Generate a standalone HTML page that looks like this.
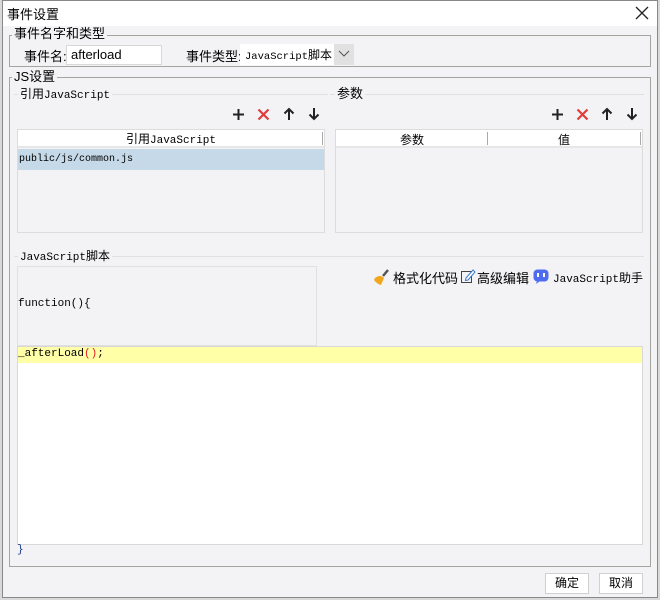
<!DOCTYPE html>
<html><head><meta charset="utf-8"><style>
*{box-sizing:border-box;margin:0;padding:0}
body{width:660px;height:600px;overflow:hidden;background:#d9d9d9;position:relative;font-family:"Liberation Sans","Noto Sans CJK SC",sans-serif;font-size:13px;color:#000}
.a{position:absolute;white-space:nowrap}
.mono{font-family:"Liberation Mono","Noto Sans CJK SC",monospace;font-size:10px}
.mono b{font-weight:normal;font-size:12px;font-family:"Noto Sans CJK SC",sans-serif}
.dlg{left:2px;top:0;width:656px;height:598px;background:#f3f3f5;border:1px solid #888}
.grp{border:1px solid #a5a5a0}
.lbl{background:#f3f3f5;padding:0 2px;line-height:14px}
.line{height:1px;background:#e0e0e0}
.tbl{background:#f3f3f5;border:1px solid #dcdcdc}
.btn{background:#fff;border:1px solid #d0d0d0;text-align:center;line-height:19px;font-size:12px}
</style></head><body>
<div class="a dlg"></div>
<div class="a" style="left:3px;top:1px;width:654px;height:25px;background:#fff"></div>
<div class="a" style="left:7px;top:4px;font-size:13px">事件设置</div>
<svg class="a" style="left:635px;top:6px" width="14" height="14"><path d="M1 1L13 13M13 1L1 13" stroke="#222" stroke-width="1.3"/></svg>

<div class="a grp" style="left:9px;top:35px;width:642px;height:32px"></div>
<div class="a lbl" style="left:12px;top:27px">事件名字和类型</div>
<div class="a" style="left:24px;top:46px">事件名:</div>
<div class="a" style="left:66px;top:45px;width:96px;height:20px;background:#fff;border:1px solid #d8d8d8;padding-left:4px;line-height:18px">afterload</div>
<div class="a" style="left:186px;top:46px">事件类型:</div>
<div class="a mono" style="left:240px;top:44px;width:94px;height:21px;background:#fff;padding-left:5px;line-height:21px;font-size:10.5px;overflow:hidden">JavaScript<b>脚本</b></div>
<div class="a" style="left:334px;top:44px;width:20px;height:21px;background:#e1e1e1"></div>
<svg class="a" style="left:338px;top:50px" width="12" height="8"><path d="M1 1L6 6L11 1" stroke="#555" fill="none"/></svg>

<div class="a grp" style="left:9px;top:77px;width:642px;height:490px"></div>
<div class="a lbl" style="left:12px;top:70px">JS设置</div>
<div class="a line" style="left:14px;top:94px;width:314px"></div>
<div class="a lbl mono" style="left:18px;top:87px;font-size:11px"><b>引用</b>JavaScript</div>
<div class="a line" style="left:330px;top:94px;width:314px"></div>
<div class="a lbl" style="left:335px;top:87px">参数</div>

<svg class="a" style="left:232px;top:108px" width="13" height="13"><path d="M6.5 1V12M1 6.5H12" stroke="#222" stroke-width="2"/></svg>
<svg class="a" style="left:257px;top:108px" width="13" height="13"><path d="M1.5 1.5L11.5 11.5M11.5 1.5L1.5 11.5" stroke="#e03c3c" stroke-width="2.2"/></svg>
<svg class="a" style="left:283px;top:107px" width="12" height="14"><path d="M6 13V2M1.5 6.5L6 2L10.5 6.5" stroke="#222" stroke-width="2" fill="none"/></svg>
<svg class="a" style="left:308px;top:107px" width="12" height="14"><path d="M6 1V12M1.5 7.5L6 12L10.5 7.5" stroke="#222" stroke-width="2" fill="none"/></svg>
<svg class="a" style="left:551px;top:108px" width="13" height="13"><path d="M6.5 1V12M1 6.5H12" stroke="#222" stroke-width="2"/></svg>
<svg class="a" style="left:576px;top:108px" width="13" height="13"><path d="M1.5 1.5L11.5 11.5M11.5 1.5L1.5 11.5" stroke="#e03c3c" stroke-width="2.2"/></svg>
<svg class="a" style="left:601px;top:107px" width="12" height="14"><path d="M6 13V2M1.5 6.5L6 2L10.5 6.5" stroke="#222" stroke-width="2" fill="none"/></svg>
<svg class="a" style="left:626px;top:107px" width="12" height="14"><path d="M6 1V12M1.5 7.5L6 12L10.5 7.5" stroke="#222" stroke-width="2" fill="none"/></svg>

<div class="a tbl" style="left:17px;top:129px;width:308px;height:104px"></div>
<div class="a mono" style="left:18px;top:130px;width:306px;height:18px;background:#fff;text-align:center;line-height:18px;border-bottom:2px solid #e6e6e6;font-size:11px"><b>引用</b>JavaScript</div>
<div class="a" style="left:322px;top:132px;width:1px;height:13px;background:#aaa"></div>
<div class="a mono" style="left:18px;top:149px;width:306px;height:21px;background:#c5d9e8;line-height:21px;padding-left:1px">public/js/common.js</div>

<div class="a tbl" style="left:335px;top:129px;width:308px;height:104px"></div>
<div class="a" style="left:336px;top:130px;width:306px;height:18px;background:#fff;border-bottom:2px solid #e6e6e6"></div>
<div class="a" style="left:336px;top:131px;width:152px;text-align:center;font-size:12px">参数</div>
<div class="a" style="left:488px;top:131px;width:152px;text-align:center;font-size:12px">值</div>
<div class="a" style="left:487px;top:132px;width:1px;height:13px;background:#aaa"></div>
<div class="a" style="left:640px;top:132px;width:1px;height:13px;background:#aaa"></div>

<div class="a line" style="left:14px;top:256px;width:630px"></div>
<div class="a lbl mono" style="left:18px;top:249px;font-size:11px">JavaScript<b>脚本</b></div>
<div class="a" style="left:17px;top:266px;width:300px;height:80px;border:1px solid #e0e0e0"></div>
<div class="a mono" style="left:18px;top:298px;font-size:11px">function(){</div>

<svg class="a" style="left:372px;top:268px" width="18" height="18"><path d="M11 8L16 2" stroke="#555" stroke-width="2.5"/><path d="M3 10Q8 6 12 10L9 17Q5 16 2 12Z" fill="#f0a71e"/></svg>
<div class="a" style="left:393px;top:268px">格式化代码</div>
<svg class="a" style="left:460px;top:268px" width="16" height="16"><rect x="1.5" y="3.5" width="10" height="11" fill="none" stroke="#444"/><path d="M6 10L13 2L15 4L8 12L5.5 12.5Z" fill="#fff" stroke="#3a7bd5"/></svg>
<div class="a" style="left:477px;top:268px">高级编辑</div>
<svg class="a" style="left:533px;top:269px" width="16" height="15"><rect x="0.5" y="0.5" width="15" height="12" rx="4" fill="#4d6cf0"/><path d="M4 12L3 15L7 12Z" fill="#4d6cf0"/><rect x="4" y="4" width="2" height="4" fill="#fff"/><rect x="10" y="4" width="2" height="4" fill="#fff"/></svg>
<div class="a mono" style="left:553px;top:269px;font-size:11px">JavaScript<b>助手</b></div>

<div class="a" style="left:17px;top:346px;width:626px;height:199px;background:#fff;border:1px solid #d8d8d8"></div>
<div class="a" style="left:18px;top:347px;width:624px;height:16px;background:#ffffa8"></div>
<div class="a mono" style="left:18px;top:347px;line-height:15px;font-size:11px">_afterLoad<span style="color:#e02020">()</span>;</div>
<div class="a mono" style="left:17px;top:544px;color:#1a3a8a;font-size:11px">}</div>

<div class="a btn" style="left:545px;top:573px;width:44px;height:21px">确定</div>
<div class="a btn" style="left:599px;top:573px;width:44px;height:21px">取消</div>
</body></html>
